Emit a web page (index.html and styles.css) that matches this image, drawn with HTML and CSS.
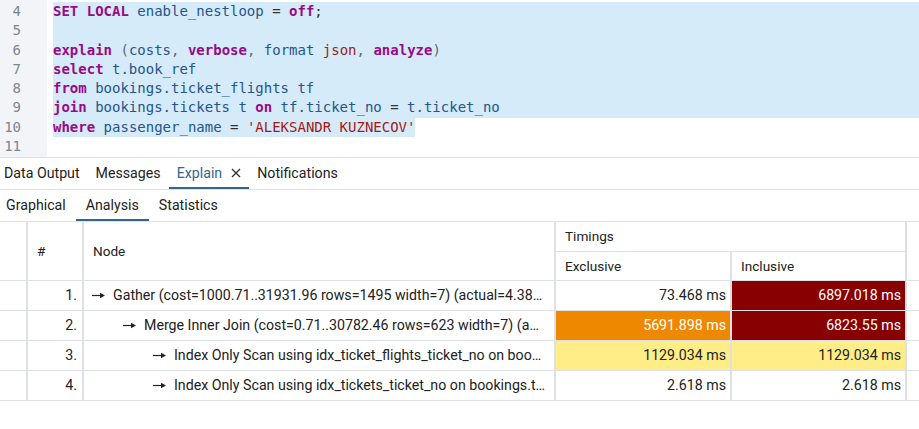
FILE: index.html
```html
<!DOCTYPE html>
<html>
<head>
<meta charset="utf-8">
<link rel="stylesheet" href="styles.css">
</head>
<body>
<div class="editor">
  <div class="gutter">
    <div>4</div><div>5</div><div>6</div><div>7</div><div>8</div><div>9</div><div>10</div><div>11</div>
  </div>
  <div class="code">
    <div class="line sel"><span class="kw">SET LOCAL</span> <span class="var">enable_nestloop</span> = <span class="kw">off</span>;</div>
    <div class="line sel"></div>
    <div class="line sel"><span class="kw">explain</span> <span class="punc">(</span><span class="var">costs</span><span class="punc">,</span> <span class="kw">verbose</span><span class="punc">,</span> <span class="var">format</span> <span class="typ">json</span><span class="punc">,</span> <span class="kw">analyze</span><span class="punc">)</span></div>
    <div class="line sel"><span class="kw">select</span> <span class="var">t.book_ref</span></div>
    <div class="line sel"><span class="kw">from</span> <span class="var">bookings.ticket_flights tf</span></div>
    <div class="line sel"><span class="kw">join</span> <span class="var">bookings.tickets t</span> <span class="kw">on</span> <span class="var">tf.ticket_no</span> = <span class="var">t.ticket_no</span></div>
    <div class="line"><span class="selin"><span class="kw">where</span> <span class="var">passenger_name</span> = <span class="str">'ALEKSANDR KUZNECOV'</span></span></div>
    <div class="line"></div>
  </div>
</div>

<div class="tabbar main-tabs">
  <div class="tab first">Data Output</div>
  <div class="tab">Messages</div>
  <div class="tab active">Explain
    <svg class="close" width="10" height="10" viewBox="0 0 10 10"><path d="M1 1L9 9M9 1L1 9" stroke="#333" stroke-width="1.4" fill="none"/></svg>
  </div>
  <div class="tab">Notifications</div>
</div>

<div class="tabbar sub-tabs">
  <div class="tab first">Graphical</div>
  <div class="tab active">Analysis</div>
  <div class="tab">Statistics</div>
</div>

<table class="analysis">
  <colgroup>
    <col class="c-exp"><col class="c-num"><col class="c-node"><col class="c-time"><col class="c-time2"><col class="c-rest">
  </colgroup>
  <thead>
    <tr>
      <th rowspan="2" class="edge"></th>
      <th rowspan="2">#</th>
      <th rowspan="2">Node</th>
      <th colspan="2">Timings</th>
      <th rowspan="2"></th>
    </tr>
    <tr>
      <th>Exclusive</th>
      <th>Inclusive</th>
    </tr>
  </thead>
  <tbody>
    <tr>
      <td class="edge"></td>
      <td class="num">1.</td>
      <td class="node lvl0"><svg class="arrow" width="13" height="7" viewBox="0 0 13 7"><path d="M0 3.5H9" stroke="#222" stroke-width="1.2"/><path d="M8 0.8L13 3.5L8 6.2Z" fill="#222"/></svg>Gather (cost=1000.71..31931.96 rows=1495 width=7) (actual=4.389..6897.018 rows=16 loops=1)</td>
      <td class="time">73.468 ms</td>
      <td class="time hot">6897.018 ms</td>
      <td></td>
    </tr>
    <tr>
      <td class="edge"></td>
      <td class="num">2.</td>
      <td class="node lvl1"><svg class="arrow" width="13" height="7" viewBox="0 0 13 7"><path d="M0 3.5H9" stroke="#222" stroke-width="1.2"/><path d="M8 0.8L13 3.5L8 6.2Z" fill="#222"/></svg>Merge Inner Join (cost=0.71..30782.46 rows=623 width=7) (actual=1129.581..6823.550 rows=5 loops=3)</td>
      <td class="time warm">5691.898 ms</td>
      <td class="time hot">6823.55 ms</td>
      <td></td>
    </tr>
    <tr>
      <td class="edge"></td>
      <td class="num">3.</td>
      <td class="node lvl2"><svg class="arrow" width="13" height="7" viewBox="0 0 13 7"><path d="M0 3.5H9" stroke="#222" stroke-width="1.2"/><path d="M8 0.8L13 3.5L8 6.2Z" fill="#222"/></svg>Index Only Scan using idx_ticket_flights_ticket_no on bookings.ticket_flights tf (cost=0.43..139110.29 rows=2797284 width=14)</td>
      <td class="time mild">1129.034 ms</td>
      <td class="time mild">1129.034 ms</td>
      <td></td>
    </tr>
    <tr>
      <td class="edge"></td>
      <td class="num">4.</td>
      <td class="node lvl2"><svg class="arrow" width="13" height="7" viewBox="0 0 13 7"><path d="M0 3.5H9" stroke="#222" stroke-width="1.2"/><path d="M8 0.8L13 3.5L8 6.2Z" fill="#222"/></svg>Index Only Scan using idx_tickets_ticket_no on bookings.tickets t (cost=0.42..4.44 rows=1 width=21)</td>
      <td class="time">2.618 ms</td>
      <td class="time">2.618 ms</td>
      <td></td>
    </tr>
  </tbody>
</table>
</body>
</html>
```
FILE: styles.css
```css
html, body {
  margin: 0;
  padding: 0;
}
body {
  width: 919px;
  height: 429px;
  overflow: hidden;
  background: #ffffff;
  font-family: Roboto, "Liberation Sans", sans-serif;
  color: #222222;
}

/* ---------- editor ---------- */
.editor {
  display: flex;
  height: 157px;
  border-bottom: 1px solid #dcdfe5;
  overflow: hidden;
}
.gutter {
  width: 47px;
  flex: none;
  box-sizing: border-box;
  background: #f3f4f7;
  padding: 2px 26px 0 0;
  text-align: right;
  font: 14px/19.3px "DejaVu Sans Mono", monospace;
  color: #80858d;
}
.code {
  flex: 1;
  padding: 2px 0 0 6px;
  font: 14px/19.3px "DejaVu Sans Mono", monospace;
  color: #333333;
}
.line {
  height: 19.3px;
  white-space: pre;
}
.line.sel,
.selin {
  background: #d5ebf9;
}
.selin {
  display: inline-block;
  height: 19.3px;
}
.kw { color: #980a86; font-weight: bold; }
.var { color: #25558a; }
.typ { color: #9a2020; }
.str { color: #a31818; }
.punc { color: #666666; }

/* ---------- tabs ---------- */
.tabbar {
  display: flex;
  height: 31px;
  border-bottom: 1px solid #dde1e6;
  font-size: 14.2px;
}
.tab {
  display: flex;
  align-items: center;
  box-sizing: border-box;
  padding: 0 8px;
  border-bottom: 2px solid transparent;
  color: #222222;
}
.main-tabs .tab.first { padding-left: 4px; }
.main-tabs .tab.active { color: #326690; border-bottom-color: #326690; }
.close { margin-left: 9px; }
.sub-tabs .tab { padding: 0 10px; }
.sub-tabs .tab.first { padding-left: 6px; }
.sub-tabs .tab.active { border-bottom-color: #326690; }

/* ---------- analysis table ---------- */
.analysis {
  border-collapse: collapse;
  table-layout: fixed;
  width: 936px;
  font-size: 14.2px;
}
.c-exp { width: 27px; }
.c-num { width: 56px; }
.c-node { width: 472px; }
.c-time { width: 176px; }
.c-time2 { width: 175px; }
.c-rest { width: 30px; }

.analysis th,
.analysis td {
  border-top: 1px solid #dde1e6;
  border-bottom: 1px solid #dde1e6;
  border-left: 2px solid #dde1e6;
  border-right: 2px solid #dde1e6;
  height: 29px;
  padding: 0;
  box-sizing: border-box;
  white-space: nowrap;
  overflow: hidden;
}
.analysis tbody td { height: 30px; }
.analysis thead tr:first-child th { border-top: none; }
.analysis .edge { border-left: none; }
.analysis th {
  font-weight: normal;
  font-size: 13.6px;
  text-align: left;
  padding-left: 9px;
  color: #222222;
}
.analysis th.edge { padding: 0; }
.num {
  text-align: right;
  padding-right: 5px !important;
}
.node {
  text-overflow: ellipsis;
  padding-right: 8px !important;
}
.lvl0 { padding-left: 8px !important; }
.lvl1 { padding-left: 39px !important; }
.lvl2 { padding-left: 69px !important; }
.arrow {
  margin-right: 8px;
  vertical-align: 1px;
}
.time {
  text-align: right;
  padding-right: 4px !important;
}
.hot { background: #880000; color: #ffffff; }
.warm { background: #ee8800; color: #ffffff; }
.mild { background: #ffee88; }
```
